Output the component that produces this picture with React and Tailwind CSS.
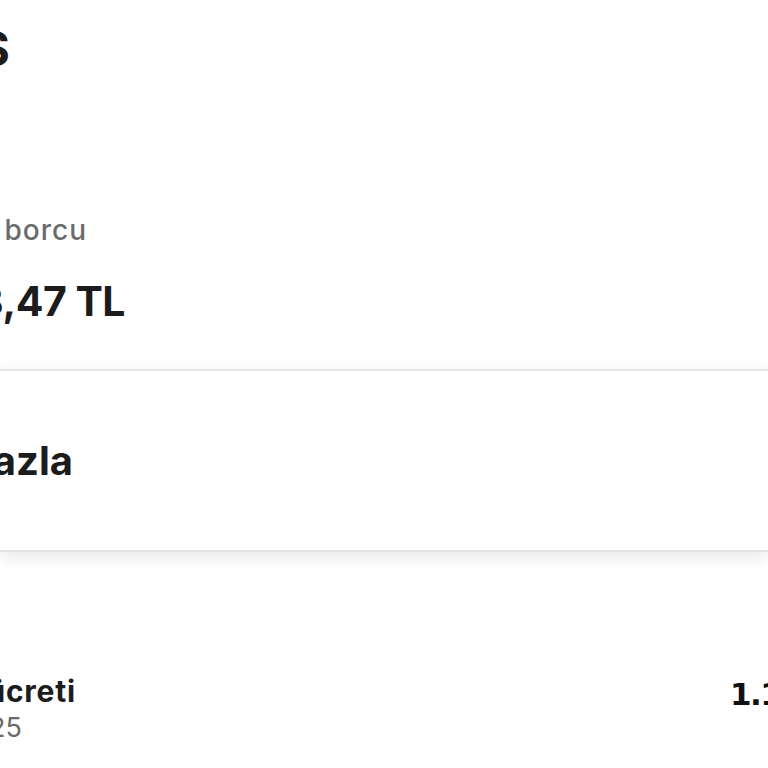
import React from "react";

function Clip({ right, children, className = "" }) {
  return (
    <div className={"flex justify-end " + className} style={{ width: right }}>
      <span className="shrink-0 whitespace-nowrap">{children}</span>
    </div>
  );
}

export default function App() {
  return (
    <div
      className="w-[768px] h-[768px] overflow-hidden bg-white flex flex-col"
      style={{ fontFamily: "Inter, 'Noto Sans', sans-serif" }}
    >
      <Clip right={10} className="mt-[25px] text-[48px] leading-none font-bold text-[#1c1c1c]">
        Hesaplar S
      </Clip>
      <Clip right={87} className="mt-[143px] text-[28px] leading-none font-medium tracking-[1px] text-[#6b6b6b]">
        Toplam  borcu
      </Clip>
      <Clip right={125} className="mt-[37px] text-[41px] leading-none font-bold tracking-[-0.5px] text-[#1c1c1c]">
        1.253,47 TL
      </Clip>
      <div className="mt-[47px] h-[183px] shrink-0 border-y-2 border-[#e4e4e4] bg-white shadow-[0_-6px_8px_rgba(0,0,0,0.025),0_8px_12px_rgba(0,0,0,0.07)] flex items-center">
        <Clip right={73} className="text-[40px] leading-none font-bold text-[#1c1c1c]">
          Daha fazla
        </Clip>
      </div>
      <div className="mt-[124px] flex justify-between items-start">
        <div className="flex flex-col">
          <Clip right={76} className="text-[30px] leading-none font-bold tracking-[0.8px] text-[#1c1c1c]">
            Hizmet ücreti
          </Clip>
          <Clip right={22} className="mt-[8px] text-[27px] leading-none text-[#6b6b6b]">
            12.03.2025
          </Clip>
        </div>
        <div
          className="ml-auto w-[38px] overflow-visible whitespace-nowrap text-[31px] leading-none font-bold tracking-[-1.5px] text-[#111] mt-[3px]"
          style={{ fontFamily: "'DejaVu Sans', sans-serif" }}
        >
          1.150,00 TL
        </div>
      </div>
    </div>
  );
}
